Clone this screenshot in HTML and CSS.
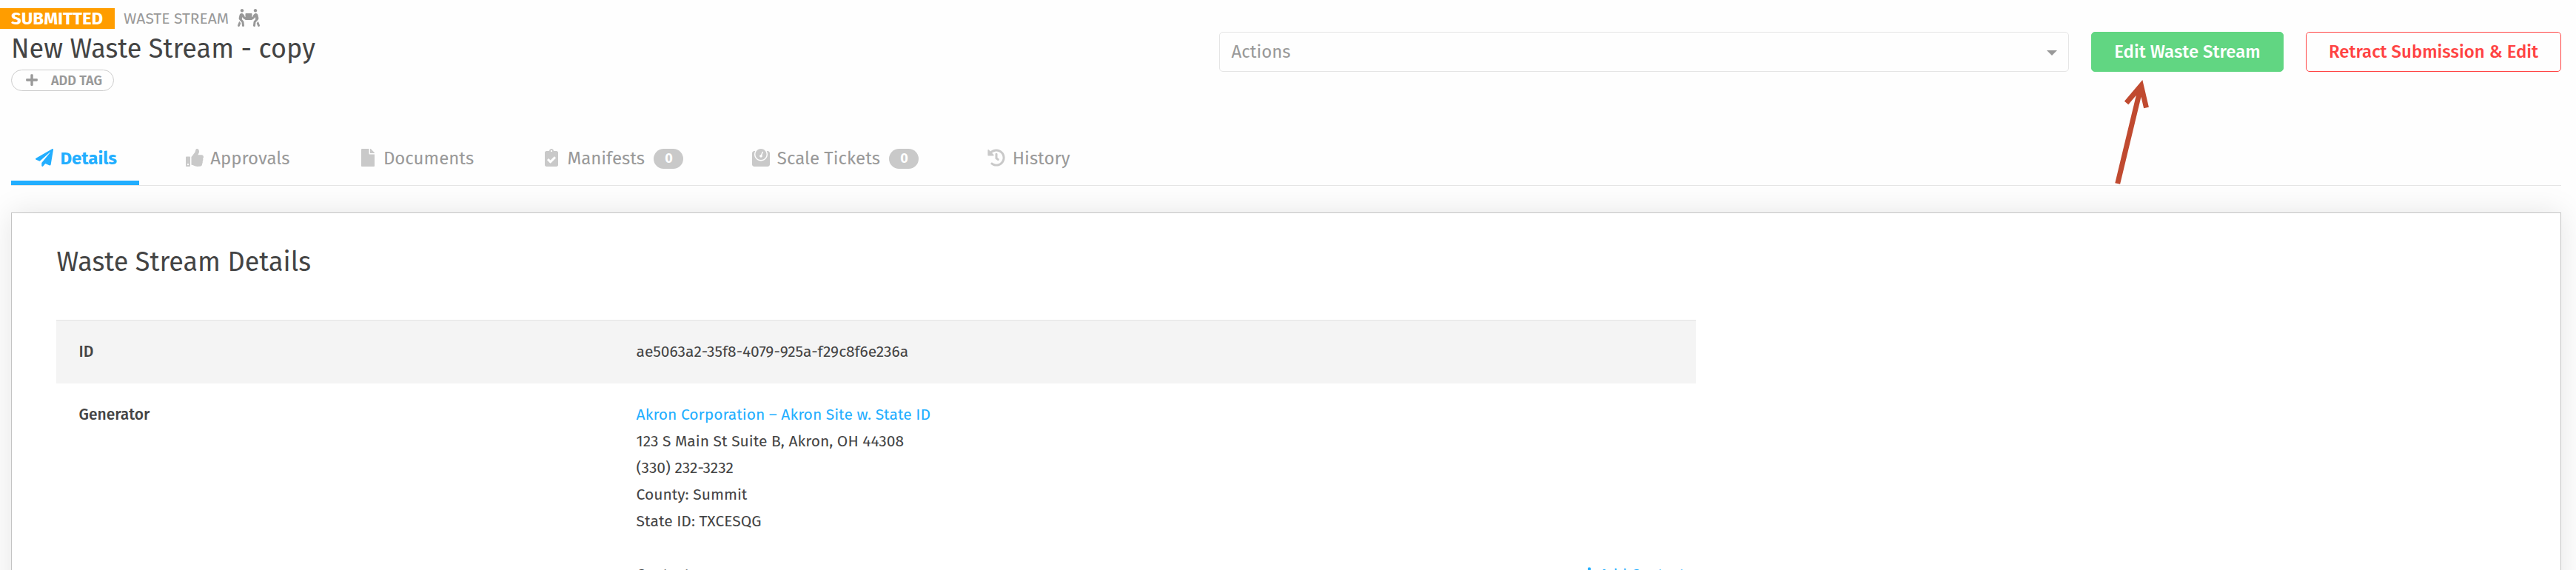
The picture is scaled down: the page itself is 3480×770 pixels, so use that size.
FILE: index.html
```html
<!DOCTYPE html>
<html lang="en">
<head>
  <meta charset="UTF-8">
  <meta name="viewport" content="width=device-width, initial-scale=1.0">
  <title>New Waste Stream - copy</title>
  <link rel="stylesheet" href="styles.css">
</head>
<body>
  <header class="page-header">
    <div class="heading">
      <div class="meta">
        <span class="status">SUBMITTED</span>
        <span class="type">WASTE STREAM</span>
        <svg class="type-icon" viewBox="0 0 640 512"><path d="M128 96c26.5 0 48-21.5 48-48S154.5 0 128 0 80 21.5 80 48s21.5 48 48 48zm384 0c26.5 0 48-21.5 48-48S538.5 0 512 0s-48 21.5-48 48 21.5 48 48 48zm125.7 372.1l-44-110-41.1 46.4-2 18.2 27.7 69.2c5 12.5 17 20.1 29.7 20.1 4 0 8-.7 11.9-2.3 16.4-6.6 24.4-25.2 17.8-41.6zm-34.2-209.8L585 178.1c-4.6-20-18.6-36.8-37.5-44.9-18.5-8-39-6.7-56.1 3.3-22.7 13.4-39.7 34.5-48.1 59.4L432 229.8 416 240v-96c0-8.8-7.2-16-16-16H240c-8.8 0-16 7.2-16 16v96l-16.1-10.2-11.3-33.9c-8.3-25-25.4-46-48.1-59.4-17.2-10-37.6-11.3-56.1-3.3-18.9 8.1-32.9 24.9-37.5 44.9l-18.4 80.2c-4.6 20 .7 41.2 14.4 56.7l67.2 75.9 10.1 92.6C130 499.8 143.8 512 160 512c1.2 0 2.3-.1 3.5-.2 17.6-1.9 30.2-17.7 28.3-35.3l-10.1-92.8c-1.5-13-6.9-25.1-15.6-35l-43.3-49 17.6-70.3 6.8 20.4c4.1 12.5 11.9 23.4 24.5 32.6l51.1 32.5c4.6 2.9 12.1 4.6 17.2 5h160c5.1-.4 12.6-2.1 17.2-5l51.1-32.5c12.6-9.2 20.4-20 24.5-32.6l6.8-20.4 17.6 70.3-43.3 49c-8.7 9.9-14.1 22-15.6 35l-10.1 92.8c-1.9 17.6 10.8 33.4 28.3 35.3 1.2.1 2.3.2 3.5.2 16.1 0 30-12.1 31.8-28.5l10.1-92.6 67.2-75.9c13.6-15.5 19-36.7 14.4-56.7zM46.3 358.1l-44 110c-6.6 16.4 1.4 35 17.8 41.6 16.8 6.6 35.1-1.7 41.6-17.8l27.7-69.2-2-18.2-41.1-46.4z"/></svg>
      </div>
      <h1>New Waste Stream - copy</h1>
      <button class="add-tag" type="button">
        <svg viewBox="0 0 448 512"><path d="M416 208H272V64c0-17.67-14.33-32-32-32h-32c-17.67 0-32 14.33-32 32v144H32c-17.67 0-32 14.33-32 32v32c0 17.67 14.33 32 32 32h144v144c0 17.67 14.33 32 32 32h32c17.67 0 32-14.33 32-32V304h144c17.67 0 32-14.33 32-32v-32c0-17.67-14.33-32-32-32z"/></svg>
        ADD TAG
      </button>
    </div>
    <div class="actions">
      <div class="select">
        <span>Actions</span>
        <span class="caret"></span>
      </div>
      <button class="btn btn-green" type="button">Edit Waste Stream</button>
      <button class="btn btn-red" type="button">Retract Submission &amp; Edit</button>
    </div>
  </header>

  <nav class="tabs">
    <a class="tab active">
      <svg viewBox="0 0 512 512"><path d="M476 3.2L12.5 270.6c-18.1 10.4-15.8 35.6 2.2 43.2L121 358.4l287.3-253.2c5.5-4.9 13.3 2.6 8.6 8.3L176 407v80.5c0 23.6 28.5 32.9 42.5 15.8L282 426l124.6 52.2c14.2 6 30.4-2.9 33-18.2l72-432C515 7.8 493.3-6.8 476 3.2z"/></svg>
      <span>Details</span>
    </a>
    <a class="tab">
      <svg viewBox="0 0 512 512"><path d="M104 224H24c-13.255 0-24 10.745-24 24v240c0 13.255 10.745 24 24 24h80c13.255 0 24-10.745 24-24V248c0-13.255-10.745-24-24-24zM64 472c-13.255 0-24-10.745-24-24s10.745-24 24-24 24 10.745 24 24-10.745 24-24 24zM384 81.452c0 42.416-25.97 66.208-33.277 94.548h101.723c33.397 0 59.397 27.746 59.553 58.098.084 17.938-7.546 37.249-19.439 49.197l-.11.11c9.836 23.337 8.237 56.037-9.308 79.469 8.681 25.895-.069 57.704-16.382 74.757 4.298 17.598 2.244 32.575-6.148 44.632C440.202 511.587 389.616 512 346.839 512l-2.845-.001c-48.287-.017-87.806-17.598-119.56-31.725-15.957-7.099-36.821-15.887-52.651-16.178-6.54-.12-11.783-5.457-11.783-11.998v-213.77c0-3.2 1.282-6.271 3.558-8.521 39.614-39.144 56.648-80.587 89.117-113.111 14.804-14.832 20.188-37.236 25.393-58.902C282.515 39.293 291.817 0 312 0c24 0 72 8 72 81.452z"/></svg>
      <span>Approvals</span>
    </a>
    <a class="tab">
      <svg viewBox="0 0 384 512"><path d="M224 136V0H24C10.7 0 0 10.7 0 24v464c0 13.3 10.7 24 24 24h336c13.3 0 24-10.7 24-24V160H248c-13.2 0-24-10.8-24-24zm160-14.1v6.1H256V0h6.1c6.4 0 12.5 2.5 17 7l97.9 98c4.5 4.5 7 10.6 7 16.9z"/></svg>
      <span>Documents</span>
    </a>
    <a class="tab">
      <svg viewBox="0 0 384 512"><path d="M336 64h-80c0-35.3-28.7-64-64-64s-64 28.7-64 64H48C21.5 64 0 85.5 0 112v352c0 26.5 21.5 48 48 48h288c26.5 0 48-21.5 48-48V112c0-26.5-21.5-48-48-48zM192 40c13.3 0 24 10.7 24 24s-10.7 24-24 24-24-10.7-24-24 10.7-24 24-24zm121.2 231.8l-143 141.8c-4.7 4.7-12.3 4.6-17-.1l-82.6-83.3c-4.7-4.7-4.6-12.3.1-17L99.1 285c4.7-4.7 12.3-4.6 17 .1l46 46.4 106-105.2c4.7-4.7 12.3-4.6 17 .1l28.2 28.4c4.7 4.8 4.6 12.3-.1 17z"/></svg>
      <span>Manifests</span>
      <span class="badge">0</span>
    </a>
    <a class="tab">
      <svg viewBox="0 0 512 512"><path d="M448 64h-25.98C438.44 92.28 448 125.01 448 160c0 105.87-86.13 192-192 192S64 265.87 64 160c0-34.99 9.56-67.72 25.98-96H64C28.71 64 0 92.71 0 128v320c0 35.29 28.71 64 64 64h384c35.29 0 64-28.71 64-64V128c0-35.29-28.71-64-64-64zM256 320c88.37 0 160-71.63 160-160S344.37 0 256 0 96 71.63 96 160s71.63 160 160 160zm-.3-151.94l33.58-78.36c3.5-8.17 12.94-11.92 21.03-8.41 8.12 3.48 11.88 12.89 8.41 21l-33.67 78.55C291.73 188 296 197.45 296 208c0 22.09-17.91 40-40 40s-40-17.91-40-40c0-21.98 17.76-39.77 39.7-39.94z"/></svg>
      <span>Scale Tickets</span>
      <span class="badge">0</span>
    </a>
    <a class="tab">
      <svg viewBox="0 0 512 512"><path d="M504 255.531c.253 136.64-111.18 248.372-247.82 248.468-59.015.042-113.223-20.53-155.822-54.911-11.077-8.94-11.905-25.541-1.839-35.607l11.267-11.267c8.609-8.609 22.353-9.551 31.891-1.984C173.062 425.135 212.781 440 256 440c101.705 0 184-82.311 184-184 0-101.705-82.311-184-184-184-48.814 0-93.149 18.969-126.068 49.932l50.754 50.754c10.08 10.08 2.941 27.314-11.313 27.314H24c-8.837 0-16-7.163-16-16V38.627c0-14.254 17.234-21.393 27.314-11.314l49.372 49.372C129.209 34.136 189.552 8 256 8c136.81 0 247.747 110.78 248 247.531zm-180.912 78.784l9.823-12.63c8.138-10.463 6.253-25.542-4.21-33.679L288 256.349V152c0-13.255-10.745-24-24-24h-16c-13.255 0-24 10.745-24 24v135.651l65.409 50.874c10.463 8.137 25.541 6.253 33.679-4.21z"/></svg>
      <span>History</span>
    </a>
  </nav>

  <main class="card">
    <h2>Waste Stream Details</h2>
    <dl class="details">
      <div class="row shaded">
        <dt>ID</dt>
        <dd>ae5063a2-35f8-4079-925a-f29c8f6e236a</dd>
      </div>
      <div class="row">
        <dt>Generator</dt>
        <dd>
          <a class="link">Akron Corporation – Akron Site w. State ID</a><br>
          123 S Main St Suite B, Akron, OH 44308<br>
          (330) 232-3232<br>
          County: Summit<br>
          State ID: TXCESQG
          <div class="contacts">
            <span>Contacts</span>
            <a class="link">
              <svg viewBox="0 0 448 512"><path d="M416 208H272V64c0-17.67-14.33-32-32-32h-32c-17.67 0-32 14.33-32 32v144H32c-17.67 0-32 14.33-32 32v32c0 17.67 14.33 32 32 32h144v144c0 17.67 14.33 32 32 32h32c17.67 0 32-14.33 32-32V304h144c17.67 0 32-14.33 32-32v-32c0-17.67-14.33-32-32-32z"/></svg>
              Add Contact
            </a>
          </div>
        </dd>
      </div>
    </dl>
  </main>

  <!-- arrow pointing at the edit button -->
  <svg class="arrow" viewBox="0 0 60 150">
    <path d="M15.7 148L46.5 20M27.6 39L47.5 15.5L54.5 45.5"/>
  </svg>
</body>
</html>
```
FILE: styles.css
```css
* {
  box-sizing: border-box;
}
body {
  margin: 0;
  height: 770px;
  overflow: hidden;
  position: relative;
  background: #fefefe;
  color: #444;
  font-family: "Fira Sans", "Noto Sans", sans-serif;
  font-size: 24px;
}
svg {
  fill: currentColor;
}
h1, h2 {
  margin: 0;
  font-size: 36px;
  font-weight: 400;
  line-height: 44px;
}
button {
  font-family: inherit;
  background: none;
}

/* header */
.page-header {
  display: flex;
  justify-content: space-between;
  height: 196px;
  padding: 11px 20px 0 0;
}
.meta {
  display: flex;
  align-items: center;
  height: 28px;
  margin-bottom: 5px;
  color: #999;
}
.status {
  width: 155px;
  height: 28px;
  padding-left: 15px;
  background: #ff9d00;
  color: #fff;
  font-size: 24px;
  font-weight: 700;
  line-height: 28px;
}
.type {
  margin-left: 12px;
  font-size: 21px;
  line-height: 28px;
}
.type-icon {
  width: 30px;
  height: 24px;
  margin: 0 0 2px 11.5px;
}
.heading h1 {
  padding-left: 15px;
}
.add-tag {
  display: flex;
  align-items: center;
  width: 139px;
  height: 29px;
  margin: 6px 0 0 15px;
  padding: 0 0 0 19px;
  border: 1px solid #ccc;
  border-radius: 15px;
  color: #999;
  font-size: 18px;
  font-weight: 600;
  line-height: 26px;
}
.add-tag svg {
  width: 16px;
  height: 18px;
  margin: 0 18px 2px 0;
}
.actions {
  display: flex;
  gap: 30px;
  height: 54px;
  margin-top: 32px;
}
.select {
  display: flex;
  align-items: center;
  justify-content: space-between;
  width: 1148px;
  padding: 0 15px 0 15.5px;
  border: 1px solid #e5e5e5;
  border-radius: 5px;
  color: #999;
}
.caret {
  border: 7px solid transparent;
  border-top-color: #999;
  border-bottom: 0;
  margin-top: 3px;
}
.btn {
  padding: 0;
  border: 1px solid;
  border-radius: 5px;
  font-size: 24px;
  font-weight: 500;
  line-height: 52px;
  white-space: nowrap;
}
.btn-green {
  width: 260px;
  border-color: #61d682;
  background: #61d682;
  color: #fff;
}
.btn-red {
  width: 345px;
  border-color: #ff4343;
  color: #ff4343;
}

/* tabs */
.tabs {
  display: flex;
  gap: 30px;
  height: 55px;
  margin: 0 20px 36px 15px;
  border-bottom: 1px solid #e5e5e5;
}
.tab {
  display: flex;
  height: 54px;
  padding: 0 30px;
  color: #999;
  line-height: 36px;
}
.tab svg {
  width: 30px;
  height: 24px;
  margin: 5px 6.4px 0 0;
  color: #c9c9c9;
}
.tab.active {
  border-bottom: 6px solid #22aeff;
  color: #22aeff;
  font-weight: 700;
}
.tab.active svg {
  color: #22aeff;
}
.badge {
  width: 40px;
  height: 27px;
  margin: 5px 0 0 12.4px;
  border-radius: 14px;
  background: #c9c9c9;
  color: #fff;
  font-size: 18px;
  font-weight: 700;
  line-height: 26px;
  text-align: center;
}

/* details */
.card {
  height: 600px;
  margin: 0 20px 0 15px;
  padding: 44px 60px 0;
  border: 1px solid #c4c4c4;
  background: #fff;
  box-shadow: 0 0 38px rgba(0, 0, 0, 0.1);
}
.card h2 {
  padding-left: 0.5px;
}
.details {
  width: 2215px;
  margin: 56px 0 0;
  border-top: 1px solid #e3e3e3;
  font-size: 21px;
  line-height: 36px;
}
.row {
  display: grid;
  grid-template-columns: 34% 66%;
  padding-top: 24px;
}
.shaded {
  height: 85px;
  background: #f4f4f4;
}
dt {
  padding-left: 30.5px;
  font-weight: 500;
}
dd {
  margin: 0;
  padding: 0 15px 0 30.5px;
}
.link {
  color: #22aeff;
}
.contacts {
  display: flex;
  justify-content: space-between;
  margin-top: 36px;
}
.contacts .link {
  display: flex;
  align-items: center;
}
.contacts svg {
  width: 18px;
  height: 21px;
  margin: 0 5px 1px 0;
}

.arrow {
  position: absolute;
  left: 2845px;
  top: 100px;
  width: 60px;
  height: 150px;
  fill: none;
  stroke: #c04a30;
  stroke-width: 7;
}
```
